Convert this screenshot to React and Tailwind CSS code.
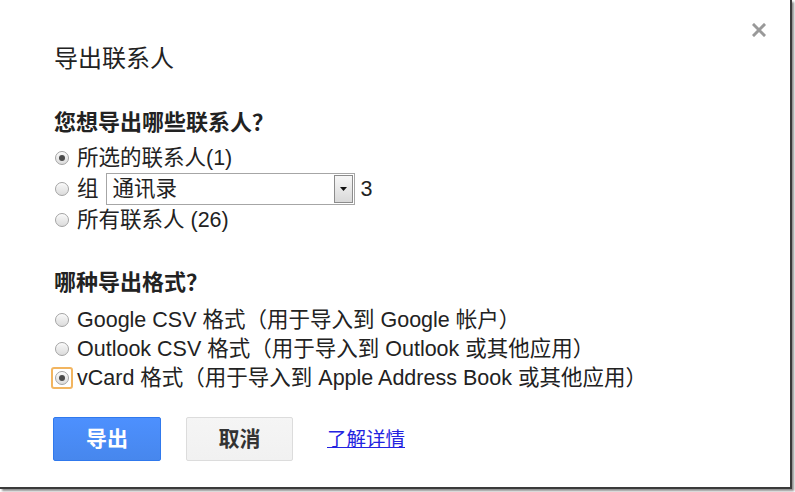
import React from "react";

const FONT = { fontFamily: '"Liberation Sans", Arial, "Noto Sans CJK SC", sans-serif' };

function Radio({ checked, focus }) {
  const circle = (
    <span className="relative flex h-[14px] w-[14px] items-center justify-center rounded-full border border-[#a3a3a3] bg-gradient-to-b from-[#f8f8f8] to-[#dcdcdc] shadow-[inset_0_1px_1px_rgba(255,255,255,0.8)]">
      {checked && <span className="h-[6px] w-[6px] rounded-full bg-[#4a4a4a]" />}
    </span>
  );
  if (focus) {
    return (
      <span className="-ml-[4px] mr-[4px] flex h-[22px] w-[22px] items-center justify-center rounded-[3px] border-2 border-[#f2b560]">
        {circle}
      </span>
    );
  }
  return <span className="mr-[8px] flex">{circle}</span>;
}

export default function App() {
  return (
    <div className="relative h-[492px] w-[795px] bg-white" style={FONT}>
      <div className="relative h-[489px] w-[792px] border-b-2 border-r-2 border-[#3a3a3a] bg-white text-[#222] shadow-[2px_2px_2px_rgba(0,0,0,0.45)]">
        <svg className="absolute left-[752px] top-[23px]" width="14" height="14" viewBox="0 0 14 14">
          <path d="M2 2 L12 12 M12 2 L2 12" stroke="#999" strokeWidth="3" strokeLinecap="square" />
        </svg>
        <div className="flex flex-col pl-[54px]">
          <div className="mt-[47px] h-[24px] text-[24px] leading-[24px] text-[#222]">导出联系人</div>

          <div className="mt-[41px] h-[22px] text-[22px] font-bold leading-[22px]">您想导出哪些联系人？</div>

          <div className="mt-[8px] flex flex-col text-[21.5px] leading-[22px]">
            <div className="flex h-[31px] items-center pl-[1px]">
              <Radio checked />
              <span>所选的联系人(1)</span>
            </div>
            <div className="flex h-[31px] items-center pl-[1px]">
              <Radio />
              <span>组</span>
              <div className="ml-[7px] flex h-[32px] w-[249px] items-center justify-between border border-[#a6a6a6] bg-white pl-[6px] pr-[1px]">
                <span>通讯录</span>
                <span className="flex h-[28px] w-[19px] items-center justify-center border border-[#8c8c8c] bg-gradient-to-b from-[#f7f7f7] to-[#d9d9d9]">
                  <svg width="7" height="4" viewBox="0 0 7 4">
                    <path d="M0 0 L7 0 L3.5 4 Z" fill="#111" />
                  </svg>
                </span>
              </div>
              <span className="ml-[6px]">3</span>
            </div>
            <div className="flex h-[31px] items-center pl-[1px]">
              <Radio />
              <span>所有联系人 (26)</span>
            </div>
          </div>

          <div className="mt-[37px] h-[22px] text-[22px] font-bold leading-[22px]">哪种导出格式？</div>

          <div className="mt-[11px] flex flex-col text-[21.5px] leading-[22px]">
            <div className="flex h-[29px] items-center pl-[1px]">
              <Radio />
              <span>Google CSV 格式（用于导入到 Google 帐户）</span>
            </div>
            <div className="flex h-[29px] items-center pl-[1px]">
              <Radio />
              <span>Outlook CSV 格式（用于导入到 Outlook 或其他应用）</span>
            </div>
            <div className="flex h-[29px] items-center pl-[1px]">
              <Radio checked focus />
              <span>vCard 格式（用于导入到 Apple Address Book 或其他应用）</span>
            </div>
          </div>

          <div className="mt-[25px] flex items-center">
            <div className="-ml-[1px] flex h-[44px] w-[108px] items-center justify-center rounded-[2px] border border-[#3079ed] bg-gradient-to-b from-[#4d90fe] to-[#4787ed] text-[21px] font-bold text-white">
              导出
            </div>
            <div className="ml-[25px] flex h-[44px] w-[107px] items-center justify-center rounded-[2px] border border-[#dcdcdc] bg-gradient-to-b from-[#f5f5f5] to-[#f1f1f1] text-[21px] font-bold text-[#333]">
              取消
            </div>
            <span className="ml-[34px] text-[19.5px] leading-[20px] text-[#2323e0] underline">了解详情</span>
          </div>
        </div>
      </div>
    </div>
  );
}
